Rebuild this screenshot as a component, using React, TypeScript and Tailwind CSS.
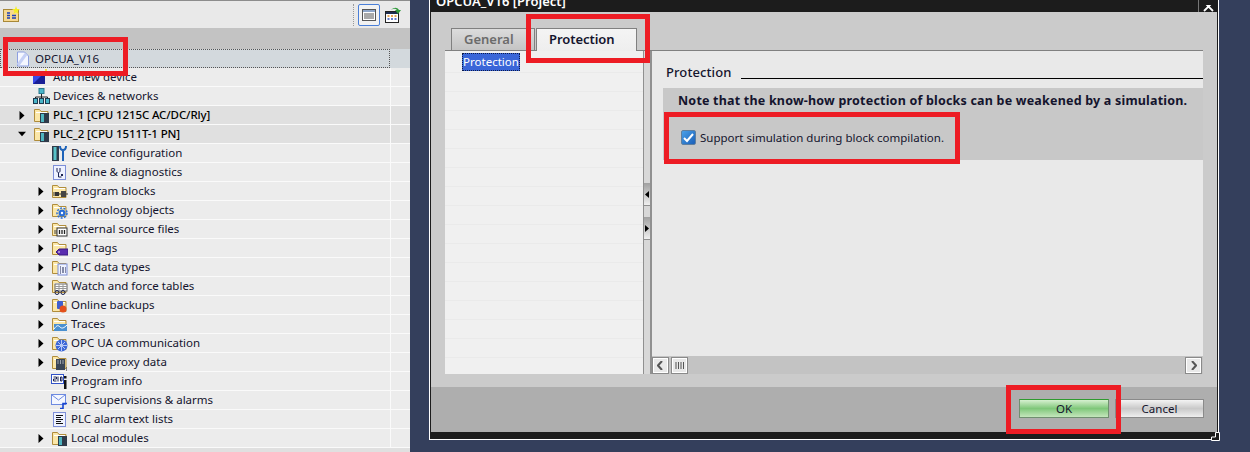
import React from "react";

const Folder = ({ children }: { children?: React.ReactNode }) => (
  <svg width="17" height="17" viewBox="0 0 17 17" className="shrink-0">
    <path d="M1.5 14.5V2.5h5l1.5 2h7v10z" fill="#fbe7a8" stroke="#b08d3c" />
    <path d="M3 5.5h11" stroke="#fff" />
    {children}
  </svg>
);

const Chip = () => (
  <>
    <rect x="7" y="6" width="9" height="10" fill="#2f3b4a" />
    <rect x="8" y="7" width="3" height="8" fill="#4fb5c0" />
  </>
);

const icons: Record<string, React.ReactNode> = {
  add: (
    <svg width="17" height="17" viewBox="0 0 17 17" className="shrink-0">
      <rect x="0" y="3" width="12" height="12" fill="#3a4ae8" />
      <path d="M0 15L12 3v12z" fill="#1a1f96" />
      <path d="M13 0v6M10 3h6" stroke="#f5e400" strokeWidth="1.4" />
    </svg>
  ),
  net: (
    <svg width="17" height="17" viewBox="0 0 17 17" className="shrink-0">
      <rect x="6" y="0.5" width="5" height="5" fill="#48b4c8" stroke="#2a7a90" />
      <path d="M8.5 6v3M2.5 11V9h12v2M8.5 9v2" stroke="#222" fill="none" />
      <rect x="0.5" y="10.5" width="4" height="5" fill="#48b4c8" stroke="#1e3a50" />
      <rect x="6.5" y="10.5" width="4" height="5" fill="#48b4c8" stroke="#1e3a50" />
      <rect x="12.5" y="10.5" width="4" height="5" fill="#48b4c8" stroke="#1e3a50" />
    </svg>
  ),
  plc: <Folder><Chip /></Folder>,
  cfg: (
    <svg width="17" height="17" viewBox="0 0 17 17" className="shrink-0">
      <rect x="1" y="1" width="7" height="15" fill="#2f3b4a" />
      <rect x="2.5" y="2" width="3" height="13" fill="#58c2c8" />
      <path d="M9 1c0 3 1 4 3 4s3-1 3-4M12 5v11" stroke="#1d62b8" strokeWidth="2" fill="none" />
    </svg>
  ),
  diag: (
    <svg width="17" height="17" viewBox="0 0 17 17" className="shrink-0">
      <rect x="2.5" y="1.5" width="12" height="14" fill="#eef2ff" stroke="#7d8fd8" />
      <path d="M6 4v3c0 2 3 2 3 0V4M7.5 9v4h3" stroke="#1b2350" fill="none" />
      <rect x="10" y="10" width="2" height="2" fill="#1b2350" />
    </svg>
  ),
  blocks: (
    <Folder>
      <rect x="4" y="9" width="4" height="4" fill="#333" />
      <rect x="10" y="8" width="5" height="6" fill="#444" />
      <path d="M2 10h2M2 12h2M8 11h2M15 11h2" stroke="#333" />
    </Folder>
  ),
  tech: (
    <Folder>
      <circle cx="11" cy="11" r="3.5" fill="#2a6fd8" />
      <circle cx="11" cy="11" r="5" fill="none" stroke="#2a6fd8" strokeWidth="1.5" strokeDasharray="2 1.5" />
      <circle cx="11" cy="11" r="1.2" fill="#fff" />
    </Folder>
  ),
  ext: (
    <Folder>
      <rect x="6" y="7" width="10" height="8" fill="#fff" stroke="#333" />
      <path d="M8.5 9v4M11 9v4M13.5 9v4" stroke="#222" strokeWidth="1.3" />
      <path d="M3 10h3M3 12h3" stroke="#444" />
    </Folder>
  ),
  tags: (
    <Folder>
      <path d="M5 12l3-3h9v6H8z" fill="#5a2db0" stroke="#3b1b80" />
      <circle cx="8" cy="12" r="0.8" fill="#fff" />
    </Folder>
  ),
  types: (
    <Folder>
      <rect x="7" y="5" width="9" height="11" fill="#eef2ff" stroke="#7d8fd8" />
      <path d="M9 8h1M9 10h1M9 12h1M9 14h1M12 8v6M14 9h1M14 11h1M14 13h1" stroke="#1b2350" />
    </Folder>
  ),
  watch: (
    <Folder>
      <rect x="4" y="6" width="12" height="7" fill="#fff" stroke="#666" />
      <path d="M4 8.5h12M4 10.5h12M8 6v7M12 6v7" stroke="#999" />
      <circle cx="6" cy="14.5" r="2" fill="none" stroke="#1b2350" />
      <circle cx="12" cy="14.5" r="2" fill="none" stroke="#1b2350" />
    </Folder>
  ),
  backup: (
    <Folder>
      <rect x="6" y="4" width="6" height="8" rx="1" fill="#3f5fd0" />
      <circle cx="12" cy="12" r="3.5" fill="#e4501c" />
    </Folder>
  ),
  traces: (
    <Folder>
      <rect x="3" y="8" width="13" height="7" fill="#4a90d0" />
      <path d="M3 13c3-4 4-4 6-2s4 1 7-2" stroke="#fff" fill="none" />
    </Folder>
  ),
  opc: (
    <Folder>
      <circle cx="10.5" cy="10.5" r="6" fill="#3d68d8" />
      <path d="M5 10.5h11M10.5 5v11M7 7l7 7M14 7l-7 7" stroke="#b8c9f5" />
    </Folder>
  ),
  proxy: (
    <Folder>
      <rect x="5" y="5" width="9" height="11" fill="#3a4656" />
      <path d="M6.5 7h1M9 7h1M11.5 7h1M6.5 9h1M9 9h1M11.5 9h1" stroke="#fff" />
      <path d="M15 14h1M15 16h1" stroke="#222" />
    </Folder>
  ),
  info: (
    <svg width="17" height="17" viewBox="0 0 17 17" className="shrink-0">
      <rect x="0.5" y="1.5" width="12" height="9" fill="#fff" stroke="#3152c8" />
      <path d="M2.5 4h3v2h-3v2h3M7 3.5v5M9.5 4h1.5v4H9.5z" stroke="#1b2350" fill="none" />
      <rect x="13" y="3" width="2.5" height="2.5" fill="#111" />
      <rect x="13" y="7" width="2.5" height="9" fill="#111" />
    </svg>
  ),
  alarm: (
    <svg width="17" height="17" viewBox="0 0 17 17" className="shrink-0">
      <rect x="0.5" y="2.5" width="14" height="10" fill="#f4f7ff" stroke="#6d8ae0" />
      <path d="M1 3l6.5 5L14 3" stroke="#6d8ae0" fill="none" />
      <path d="M9 16.5h3v-5h4" stroke="#1846d0" strokeWidth="1.6" fill="none" />
    </svg>
  ),
  list: (
    <svg width="17" height="17" viewBox="0 0 17 17" className="shrink-0">
      <rect x="2.5" y="1.5" width="12" height="14" fill="#eef2ff" stroke="#7d8fd8" />
      <path d="M5 4.5h7M5 6.5h5M5 8.5h7M5 10.5h5M5 12.5h7" stroke="#111" />
    </svg>
  ),
  local: <Folder><Chip /></Folder>,
};

type Row = { t: string; i: string; lvl: 1 | 2; a?: "r" | "d"; dark?: boolean; bold?: boolean };

const rows: Row[] = [
  { t: "Add new device", i: "add", lvl: 1 },
  { t: "Devices & networks", i: "net", lvl: 1 },
  { t: "PLC_1 [CPU 1215C AC/DC/Rly]", i: "plc", lvl: 1, a: "r", dark: true, bold: true },
  { t: "PLC_2 [CPU 1511T-1 PN]", i: "plc", lvl: 1, a: "d", dark: true, bold: true },
  { t: "Device configuration", i: "cfg", lvl: 2 },
  { t: "Online & diagnostics", i: "diag", lvl: 2 },
  { t: "Program blocks", i: "blocks", lvl: 2, a: "r" },
  { t: "Technology objects", i: "tech", lvl: 2, a: "r" },
  { t: "External source files", i: "ext", lvl: 2, a: "r" },
  { t: "PLC tags", i: "tags", lvl: 2, a: "r" },
  { t: "PLC data types", i: "types", lvl: 2, a: "r" },
  { t: "Watch and force tables", i: "watch", lvl: 2, a: "r" },
  { t: "Online backups", i: "backup", lvl: 2, a: "r" },
  { t: "Traces", i: "traces", lvl: 2, a: "r" },
  { t: "OPC UA communication", i: "opc", lvl: 2, a: "r" },
  { t: "Device proxy data", i: "proxy", lvl: 2, a: "r" },
  { t: "Program info", i: "info", lvl: 2 },
  { t: "PLC supervisions & alarms", i: "alarm", lvl: 2 },
  { t: "PLC alarm text lists", i: "list", lvl: 2 },
  { t: "Local modules", i: "local", lvl: 2, a: "r" },
];

const Arrow = ({ a }: { a?: "r" | "d" }) => (
  <span className="w-[8px] h-[9px] shrink-0 flex items-center justify-center">
    {a === "r" && (
      <svg width="6" height="9" viewBox="0 0 6 9"><path d="M0.5 0l5 4.5-5 4.5z" fill="#000" /></svg>
    )}
    {a === "d" && (
      <svg width="9" height="6" viewBox="0 0 9 6"><path d="M0 0.5h9L4.5 5.5z" fill="#000" /></svg>
    )}
  </span>
);

const TreeRow = ({ r }: { r: Row }) => (
  <div className={`h-[19px] border-b border-[#fafafa] flex items-center shrink-0 ${r.dark ? "bg-[#e0e0e0]" : "bg-[#ececec]"}`}>
    <div className={`flex items-center h-full grow ${r.lvl === 1 ? "pl-[18px]" : "pl-[37px]"}`}>
      <Arrow a={r.a} />
      <span className={`mr-[1px] flex ${r.lvl === 1 ? "ml-[7px]" : "ml-[6px]"}`}>{icons[r.i]}</span>
      <span className={`ml-[2px] text-[11.5px] leading-none whitespace-nowrap ${r.bold ? "font-medium tracking-[-0.12px] text-black" : "text-[#14142d]"}`}>{r.t}</span>
    </div>
    <div className="w-[20px] h-full border-l border-[#fafafa] shrink-0" />
  </div>
);

const Red = ({ className }: { className: string }) => (
  <div className={`absolute border-[5px] border-[#ed1c24] pointer-events-none ${className}`} />
);

const ScrollBtn = ({ children }: { children: React.ReactNode }) => (
  <div className="w-[17px] h-[17px] bg-[#e8e8e8] border border-[#8a8a8a] shadow-[inset_0_0_0_1px_#fff] flex items-center justify-center">{children}</div>
);

export default function App() {
  return (
    <div className="relative w-[1250px] h-[452px] overflow-hidden flex bg-[#343f5c] font-['Noto_Sans','Open_Sans',sans-serif]">
      {/* Project tree */}
      <div className="w-[410px] h-full flex flex-col shrink-0 bg-[#ececec]">
        <div className="h-[28px] shrink-0 flex items-center bg-[#e9e9e9] border-t border-[#8c8c8c]">
          <svg width="17" height="17" viewBox="0 0 17 17" className="ml-[3px]">
            <rect x="0.5" y="3.5" width="15" height="12" fill="#f7d890" stroke="#a88838" />
            <path d="M4 7h3M4 9.5h3M4 12h3M9 9.5h4M9 12h4" stroke="#1e3fb8" strokeWidth="1.5" />
            <path d="M13 0l1 3 3 0-2.4 2 1 3L13 6.2 10.4 8l1-3L9 3h3z" fill="#f4ee20" />
          </svg>
          <div className="grow" />
          <div className="h-[22px] border-l border-dotted border-[#999] mr-[4px]" />
          <div className="w-[22px] h-[22px] border border-[#4a7fd8] rounded-[2px] bg-[#f2f2f2] flex items-center justify-center">
            <svg width="14" height="12" viewBox="0 0 14 12">
              <rect x="0.5" y="0.5" width="13" height="11" fill="#fff" stroke="#555" />
              <rect x="1" y="1" width="12" height="2" fill="#8fa6c8" />
              <path d="M2 5h10M2 7h10M2 9h10" stroke="#555" />
            </svg>
          </div>
          <div className="w-[22px] h-[22px] ml-[5px] mr-[3px] flex items-center">
            <svg width="18" height="18" viewBox="0 0 18 18">
              <rect x="0.5" y="5.5" width="13" height="11" fill="#fff" stroke="#222" />
              <rect x="1" y="6" width="12" height="2" fill="#1e2d50" />
              <path d="M2.5 10h2M6 10h2M9.5 10h2" stroke="#e08a20" strokeWidth="1.5" />
              <path d="M2.5 13h2M6 13h2M9.5 13h2" stroke="#3050c0" strokeWidth="1.5" />
              <path d="M6 4c3-3 6-3 8 0h2l-3 4-3-4h2c-2-2-4-1-6 0z" fill="#2f9a3a" />
            </svg>
          </div>
        </div>
        <div className="h-[21px] shrink-0 bg-[#c3c3c3]" />
        <div className="h-[19px] shrink-0 bg-[#d3d9dd] flex items-center">
          <div className="h-full grow border border-dotted border-[#555] flex items-center pl-[15px]">
            <svg width="14" height="16" viewBox="0 0 14 16" className="shrink-0">
              <path d="M1.5 1h7l4 4v10h-11z" fill="#f5f7ff" stroke="#8d9fe0" />
              <path d="M2 14L10 3" stroke="#c5d0f5" strokeWidth="3" />
            </svg>
            <span className="ml-[5px] text-[11.5px] leading-none text-[#14142d]">OPCUA_V16</span>
          </div>
          <div className="w-[20px] shrink-0" />
        </div>
        {rows.map((r) => (
          <TreeRow key={r.t} r={r} />
        ))}
        <div className="grow bg-[#e0e0e0]" />
      </div>

      {/* Dialog */}
      <div className="ml-[19px] w-[790px] h-[440px] shrink-0 flex flex-col bg-[#1c1c1c] border-x border-b border-white">
        <div className="h-[12px] shrink-0 overflow-hidden flex justify-between">
          <span className="pl-[6px] -mt-[7px] text-[13px] leading-[16px] font-semibold text-white whitespace-nowrap">OPCUA_V16 [Project]</span>
          <div className="h-full w-[19px] border-l border-[#777] flex items-end justify-center mr-[1px]">
            <svg width="11" height="7" viewBox="0 0 11 7"><path d="M1 -3l9 9M10 -3l-9 9" stroke="#fff" strokeWidth="1.8" /></svg>
          </div>
        </div>
        <div className="h-[420px] mx-px shrink-0 flex flex-col bg-[#cbcbcb]">
          {/* Tabs */}
          <div className="h-[38px] shrink-0 flex items-end pl-[20px] gap-[1px]">
            <div className="w-[84px] h-[22px] border border-b-0 border-[#808080] bg-gradient-to-b from-[#dcdcdc] to-[#c4c4c4] flex items-center pl-[12px] text-[13px] font-semibold text-[#6b6b6b]">General</div>
            <div className="w-[101px] h-[23px] -mb-[1px] z-10 border border-b-0 border-[#808080] bg-gradient-to-b from-[#f4f4f4] to-[#eeeeee] flex items-center pl-[12px] pb-[1px] text-[13px] font-semibold tracking-[-0.05px] text-[#14142d]">Protection</div>
          </div>
          {/* Body */}
          <div className="h-[324px] shrink-0 mx-[14px] flex border-t border-[#808080]">
            <div className="w-[198px] shrink-0 bg-[#f0f0f0] flex flex-col">
              <div className="h-[21px] shrink-0 pt-[2px] pl-[17px] flex items-start">
                <span className="w-[58px] h-[18px] flex items-center justify-center bg-[#3a66d8] border border-dotted border-[#0b1a4a] text-[11.5px] leading-none text-white">Protection</span>
              </div>
              {Array.from({ length: 16 }).map((_, i) => (
                <div key={i} className="h-[19px] shrink-0 border-t border-[#eaeaea]" />
              ))}
            </div>
            <div className="w-[7px] shrink-0 bg-[#d8d8d8] border-l border-[#909090] flex flex-col pt-[132px]">
              <div className="h-[23px] w-[6px] bg-gradient-to-b from-[#a0a0a0] to-[#f0f0f0] border-b border-[#909090] flex items-center">
                <svg width="4" height="7" viewBox="0 0 4 7" className="ml-px"><path d="M4 0v7L0 3.5z" fill="#000" /></svg>
              </div>
              <div className="h-[11px]" />
              <div className="h-[23px] w-[6px] bg-gradient-to-b from-[#a0a0a0] to-[#f0f0f0] border-b border-[#909090] flex items-center">
                <svg width="4" height="7" viewBox="0 0 4 7" className="ml-px"><path d="M0 0v7l4-3.5z" fill="#000" /></svg>
              </div>
            </div>
            <div className="grow min-w-0 bg-[#e9e9e9] border-l-2 border-[#909090] flex flex-col">
              <div className="h-[37px] shrink-0 flex items-end pl-[14px] pb-[8px]">
                <span className="text-[13px] leading-[16px] font-medium tracking-[0.1px] text-[#14142d]">Protection</span>
                <div className="ml-[9px] grow h-px bg-black mb-[1px]" />
              </div>
              <div className="h-[72px] ml-[11px] shrink-0 bg-[#c8c8c8] flex flex-col">
                <div className="h-[27px] pl-[15px] pt-[4px] text-[12.5px] leading-[18px] font-bold tracking-[0.2px] text-[#14142d] whitespace-nowrap">Note that the know-how protection of blocks can be weakened by a simulation.</div>
                <div className="flex items-center pl-[18px] mt-[15px]">
                  <span className="w-[15px] h-[15px] rounded-[2px] border border-[#5f7f9f] bg-gradient-to-br from-[#4aa0e8] to-[#1c5fb8] flex items-center justify-center">
                    <svg width="11" height="10" viewBox="0 0 11 10"><path d="M1 5l3 3 6-7" stroke="#fff" strokeWidth="2" fill="none" /></svg>
                  </span>
                  <span className="ml-[4px] text-[11.5px] leading-none text-[#14142d] whitespace-nowrap">Support simulation during block compilation.</span>
                </div>
              </div>
              <div className="grow" />
              <div className="h-[18px] shrink-0 bg-[#c3c3c3] flex items-center pr-px gap-[2px]">
                <ScrollBtn>
                  <svg width="7" height="9" viewBox="0 0 7 9"><path d="M5 0L1 4.5 5 9" stroke="#555" strokeWidth="2" fill="none" /></svg>
                </ScrollBtn>
                <ScrollBtn>
                  <svg width="9" height="9" viewBox="0 0 9 9"><path d="M1 1v7M3.5 1v7M6 1v7M8.5 1v7" stroke="#555" /></svg>
                </ScrollBtn>
                <div className="grow" />
                <ScrollBtn>
                  <svg width="7" height="9" viewBox="0 0 7 9"><path d="M2 0l4 4.5L2 9" stroke="#555" strokeWidth="2" fill="none" /></svg>
                </ScrollBtn>
              </div>
            </div>
          </div>
          <div className="h-[13px] shrink-0" />
          {/* Footer */}
          <div className="grow bg-[#aeaeae] flex justify-end items-start pt-[12px] pr-[13px] gap-[6px]">
            <div className="w-[90px] h-[19px] border border-[#6f8f6f] border-t-[#2e9a2e] bg-gradient-to-b from-[#d6f0d0] via-[#7fc77a] to-[#c4e6bc] flex items-center justify-center text-[11.5px] text-[#14142d]">OK</div>
            <div className="w-[89px] h-[19px] border border-[#8a8a8a] bg-gradient-to-b from-[#f4f4f4] via-[#c9c9c9] to-[#efefef] flex items-center justify-center text-[11.5px] text-[#14142d]">Cancel</div>
          </div>
        </div>
        <div className="grow" />
      </div>

      {/* Resize grip of the dialog */}
      <svg width="10" height="10" viewBox="0 0 10 10" className="absolute left-[1211px] top-[432px]">
        <path d="M0.5 8.5V5H4.5V0.5H8.5V8.5z" fill="#1c1c1c" stroke="#fff" />
      </svg>

      {/* Annotation rectangles */}
      <Red className="left-[3px] top-[37px] w-[125px] h-[39px]" />
      <Red className="left-[526px] top-[14px] w-[124px] h-[49px]" />
      <Red className="left-[664px] top-[112px] w-[296px] h-[52px]" />
      <Red className="left-[1006px] top-[385px] w-[115px] h-[49px]" />
    </div>
  );
}
